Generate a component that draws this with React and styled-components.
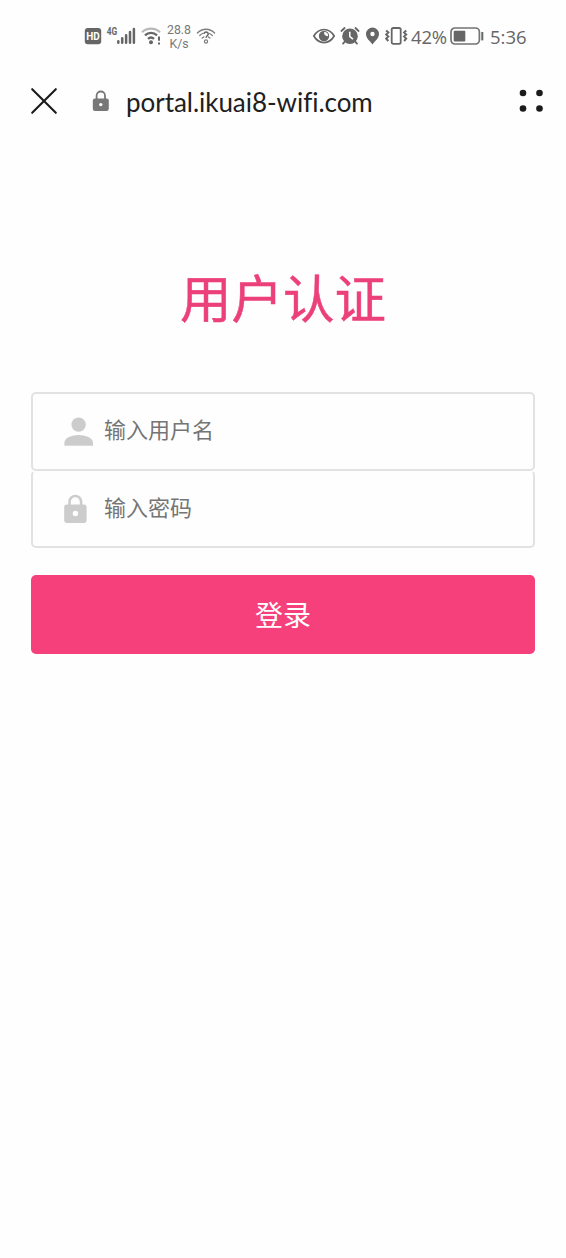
import React from "react";

import styled, { createGlobalStyle } from "styled-components";

const GlobalStyle = createGlobalStyle`
  * {
    box-sizing: border-box;
  }
  body {
    margin: 0;
    background: #fefefe;
    font-family: "Liberation Sans", "Noto Sans CJK SC", sans-serif;
  }
`;

const Page = styled.div`
  display: flex;
  flex-direction: column;
  min-height: 1258px;
  background: #fefefe;
`;

const StatusBar = styled.div`
  display: flex;
  justify-content: space-between;
  align-items: center;
  height: 72px;
  padding: 0 39px 0 84px;
  color: #666;
  font-family: Roboto, sans-serif;
`;

const StatusGroup = styled.div`
  display: flex;
  align-items: center;
`;

const StatusIcon = styled.svg`
  display: block;
  flex: none;
  margin-left: ${(props) => props.$gap || 0}px;
`;

const NetworkSpeed = styled.div`
  width: 26px;
  margin-left: 4px;
  padding-top: 1px;
  color: #777;
  font-size: 12.3px;
  line-height: 14px;
  text-align: center;
  white-space: nowrap;
`;

const StatusText = styled.span`
  width: ${(props) => props.$width}px;
  margin-left: ${(props) => props.$gap}px;
  padding-top: 1px;
  font-family: "Open Sans", sans-serif;
  font-size: 18.5px;
  line-height: 20px;
  letter-spacing: ${(props) => props.$spacing || 0}px;
  white-space: nowrap;
`;

const AddressBar = styled.header`
  display: flex;
  align-items: center;
  height: 58px;
  padding: 0 22px 0 30px;
`;

const IconButton = styled.button`
  display: flex;
  padding: 0;
  border: 0;
  background: none;
  color: #1b1b1b;
`;

const LockIcon = styled.svg`
  display: block;
  margin: 0 16px 0 34px;
`;

const Address = styled.div`
  flex: 1;
  padding-top: 1px;
  color: #202020;
  font-family: Lato, sans-serif;
  font-size: 26px;
  font-variant-ligatures: none;
  line-height: 32px;
  letter-spacing: -0.04px;
`;

const Portal = styled.main`
  padding: 130px 31px 0;
`;

const Title = styled.h1`
  margin: 0;
  color: #ec407a;
  font-family: "Noto Sans CJK SC", sans-serif;
  font-size: 51.5px;
  font-weight: 400;
  line-height: 72px;
  text-align: center;
  -webkit-text-stroke: 0.5px #ec407a;
`;

const LoginForm = styled.form`
  display: flex;
  flex-direction: column;
  margin-top: 60px;
`;

const Field = styled.label`
  display: flex;
  align-items: center;
  height: 79px;
  padding-left: 31px;
  border: 2px solid #e2e2e2;
  border-radius: 5px;

  & + & {
    height: 78px;
    margin-top: -1px;
    border-top-color: transparent;
  }
`;

const FieldIcon = styled.svg`
  display: block;
  flex: none;
  margin-right: ${(props) => props.$gap}px;
  fill: #ccc;
`;

const Input = styled.input`
  flex: 1;
  min-width: 0;
  height: 40px;
  padding: 0 0 7px;
  border: 0;
  outline: 0;
  background: none;
  font-family: "Noto Sans CJK SC", sans-serif;
  font-size: 22px;

  &::placeholder {
    color: #757575;
    opacity: 1;
  }
`;

const LoginButton = styled.button`
  height: 79px;
  margin-top: 27px;
  padding: 0 0 1px;
  border: 0;
  border-radius: 5px;
  background: #f6407b;
  color: #fff;
  font-family: "Noto Sans CJK SC", sans-serif;
  font-size: 28px;
`;

function HdIcon() {
  return (
    <StatusIcon width="18" height="20" viewBox="0 0 18 20">
      <rect x="0.8" y="2" width="16.4" height="16.2" rx="3" fill="#666" />
      <text
        x="9"
        y="13.8"
        fill="#fff"
        fontFamily="Roboto, sans-serif"
        fontSize="10"
        fontWeight="700"
        textAnchor="middle"
      >
        HD
      </text>
    </StatusIcon>
  );
}

function SignalIcon() {
  return (
    <StatusIcon $gap={4} width="31" height="20" viewBox="0 0 31 20">
      <text
        x="0.8"
        y="9"
        fill="#666"
        fontFamily="Roboto, sans-serif"
        fontSize="10"
        fontWeight="700"
        textLength="10.5"
        lengthAdjust="spacingAndGlyphs"
      >
        4G
      </text>
      <path
        d="M12.3 15.3v1.5M16.2 12.3v4.5M20.1 9.3v7.5M24 6v10.8M27.9 3v13.8"
        stroke="#666"
        strokeWidth="2.5"
        strokeLinecap="round"
      />
    </StatusIcon>
  );
}

function WifiIcon() {
  return (
    <StatusIcon $gap={4} width="21" height="20" viewBox="0 0 21 20" fill="none">
      <path d="M1 6.2C6 1.4 14 1.4 19 6.2" stroke="#b8b8b8" strokeWidth="2.2" />
      <path
        d="M4 9.4C7.5 6 12.5 6 16 9.4M7 12.8C8.8 11.2 11.2 11.2 13 12.8"
        stroke="#666"
        strokeWidth="2.3"
      />
      <circle cx="10" cy="16.3" r="2" fill="#666" />
      <path d="M18 10.5v4.2M18 16.4v2" stroke="#666" strokeWidth="2" />
    </StatusIcon>
  );
}

function WifiHelpIcon() {
  return (
    <StatusIcon $gap={4} width="20" height="20" viewBox="0 0 20 20" fill="none">
      <g stroke="#7d7d7d" strokeWidth="1.3" strokeLinecap="round">
        <path d="M1.4 7C6.2 2 13.8 2 18.6 7M3.8 9.5c.9-.9 1.7-1.5 2.7-2M13.6 7.5c1 .5 1.8 1.1 2.7 2M6.2 12.1l1.6-1.2M12.3 10.9l1.6 1.2" />
      </g>
      <path
        d="M7.9 8.1c0-2.8 4.5-2.5 4.3 0-.1 1.6-2.1 1.8-2.1 3.6"
        stroke="#666"
        strokeWidth="1.5"
      />
      <circle cx="10" cy="15.5" r="1.6" stroke="#7d7d7d" strokeWidth="1.2" />
    </StatusIcon>
  );
}

function EyeIcon() {
  return (
    <StatusIcon width="24" height="20" viewBox="0 0 24 20" fill="none">
      <path
        d="M1.8 10C7 1.3 17 1.3 22.2 10C17 18.7 7 18.7 1.8 10Z"
        stroke="#666"
        strokeWidth="1.7"
        strokeLinejoin="round"
      />
      <circle cx="12" cy="10" r="5.2" fill="#666" />
      <path d="M12.2 5.8a3.3 3.3 0 0 0 3.8 4.3c.5-2-1.2-4.2-3.8-4.3z" fill="#fefefe" />
    </StatusIcon>
  );
}

function AlarmIcon() {
  return (
    <StatusIcon $gap={4} width="20" height="20" viewBox="0 0 20 20" fill="none">
      <circle cx="10" cy="10.2" r="7.8" fill="#666" />
      <path
        d="M1.4 5 4.6 2M18.6 5 15.4 2M4.6 15.8 3 17.6M15.4 15.8 17 17.6"
        stroke="#666"
        strokeWidth="1.8"
        strokeLinecap="round"
      />
      <path d="M9.8 5.8v4.8l3.2 2.6" stroke="#fefefe" strokeWidth="1.5" />
    </StatusIcon>
  );
}

function PinIcon() {
  return (
    <StatusIcon $gap={5} width="15" height="20" viewBox="0 0 15 20">
      <path
        d="M7.5 1.6A6.5 6.5 0 0 0 1 8.1C1 12.6 5.2 15.2 7.5 18.5C9.8 15.2 14 12.6 14 8.1A6.5 6.5 0 0 0 7.5 1.6Z"
        fill="#666"
      />
      <circle cx="7.5" cy="8" r="2.2" fill="#fefefe" />
    </StatusIcon>
  );
}

function VibrateIcon() {
  return (
    <StatusIcon $gap={5} width="23" height="20" viewBox="0 0 23 20" fill="none">
      <rect x="6.7" y="2" width="9" height="15.8" rx="1.6" stroke="#666" strokeWidth="1.8" />
      <path
        d="M1.2 4.5 3.3 6.6 1.2 8.6 3.3 10.6 1.2 12.6 3.3 15M21.2 4.5 19.1 6.6 21.2 8.6 19.1 10.6 21.2 12.6 19.1 15"
        stroke="#666"
        strokeWidth="2"
      />
    </StatusIcon>
  );
}

function BatteryIcon() {
  return (
    <StatusIcon $gap={3} width="35" height="20" viewBox="0 0 35 20">
      <rect x="1" y="2" width="28.4" height="16" rx="4" fill="none" stroke="#737373" strokeWidth="1.7" />
      <rect x="3.7" y="4.8" width="11.6" height="10.6" rx="1" fill="#666" />
      <path d="M32.3 6v8.4" stroke="#666" strokeWidth="2" />
    </StatusIcon>
  );
}

export default function App() {
  return (
    <Page>
      <GlobalStyle />
      <StatusBar>
        <StatusGroup>
          <HdIcon />
          <SignalIcon />
          <WifiIcon />
          <NetworkSpeed>
            28.8
            <br />
            K/s
          </NetworkSpeed>
          <WifiHelpIcon />
        </StatusGroup>
        <StatusGroup>
          <EyeIcon />
          <AlarmIcon />
          <PinIcon />
          <VibrateIcon />
          <StatusText $gap={3} $width={36} $spacing={-0.2}>42%</StatusText>
          <BatteryIcon />
          <StatusText $gap={5} $width={37}>5:36</StatusText>
        </StatusGroup>
      </StatusBar>
      <AddressBar>
        <IconButton type="button" aria-label="Close">
          <svg width="28" height="28" viewBox="0 0 28 28">
            <path
              d="M2.2 2.2 25.8 25.8M25.8 2.2 2.2 25.8"
              stroke="currentColor"
              strokeWidth="2.1"
              strokeLinecap="round"
            />
          </svg>
        </IconButton>
        <LockIcon width="18" height="22" viewBox="0 0 18 22">
          <path d="M4.6 9V5.7a4.2 4.2 0 0 1 8.4 0V9" fill="none" stroke="#777" strokeWidth="1.8" />
          <rect x="0.8" y="8.4" width="16" height="12.6" rx="2.2" fill="#777" />
          <circle cx="8.8" cy="14.6" r="1.7" fill="#fefefe" />
        </LockIcon>
        <Address>portal.ikuai8-wifi.com</Address>
        <IconButton type="button" aria-label="Menu">
          <svg width="26" height="26" viewBox="0 0 26 26" fill="currentColor">
            <circle cx="5" cy="5" r="3.3" />
            <circle cx="21.5" cy="5" r="3.3" />
            <circle cx="5" cy="20.5" r="3.3" />
            <circle cx="21.5" cy="20.5" r="3.3" />
          </svg>
        </IconButton>
      </AddressBar>
      <Portal>
        <Title>用户认证</Title>
        <LoginForm>
          <Field>
            <FieldIcon $gap={10} width="30" height="30" viewBox="0 0 30 30">
              <circle cx="14.6" cy="7.6" r="7.2" />
              <path d="M.4 28.8v-3.2C.4 20.8 8 18 14.6 18S29 20.8 29 25.6v3.2z" />
            </FieldIcon>
            <Input type="text" placeholder="输入用户名" />
          </Field>
          <Field>
            <FieldIcon $gap={16} width="24" height="30" viewBox="0 0 24 30">
              <path d="M5.5 12V7.8a5.8 5.8 0 0 1 11.6 0V12" fill="none" stroke="#ccc" strokeWidth="2.6" />
              <rect x="0.2" y="10.5" width="22.4" height="18.4" rx="2.4" />
              <circle cx="11.4" cy="19.5" r="2.7" fill="#fefefe" />
            </FieldIcon>
            <Input type="password" placeholder="输入密码" />
          </Field>
          <LoginButton type="button">登录</LoginButton>
        </LoginForm>
      </Portal>
    </Page>
  );
}
